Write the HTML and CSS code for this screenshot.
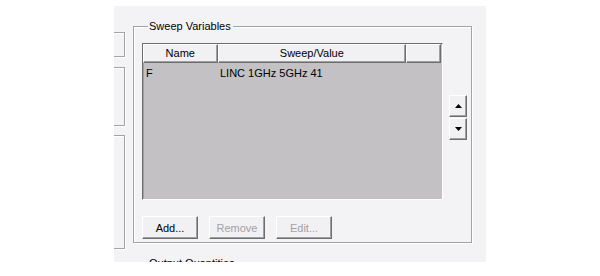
FILE: index.html
```html
<!DOCTYPE html>
<html lang="en">
<head>
    <meta charset="UTF-8">
    <title>Sweep Variables</title>
    <link rel="stylesheet" href="styles.css">
</head>
<body>

<div class="dialog">
    <div class="left-col">
        <div class="stub stub-a"></div>
        <div class="stub stub-b"></div>
        <div class="stub stub-c"></div>
    </div>

    <div class="main">
        <fieldset class="group sweep-group">
            <legend>Sweep Variables</legend>
            <div class="list-row">
                <div class="list-view">
                    <div class="list-head">
                        <div class="col col-name">Name</div>
                        <div class="col col-value">Sweep/Value</div>
                        <div class="col col-blank"></div>
                    </div>
                    <div class="list-item">
                        <span class="cell-name">F</span>
                        <span class="cell-value">LINC 1GHz 5GHz 41</span>
                    </div>
                </div>
                <div class="spin">
                    <button class="spin-btn">
                        <svg width="7" height="4" viewBox="0 0 7 4"><polygon points="0,4 7,4 3.5,0" fill="#000"/></svg>
                    </button>
                    <button class="spin-btn">
                        <svg width="7" height="4" viewBox="0 0 7 4"><polygon points="0,0 7,0 3.5,4" fill="#000"/></svg>
                    </button>
                </div>
            </div>
            <div class="btn-row">
                <button class="win-btn">Add...</button>
                <button class="win-btn" disabled>Remove</button>
                <button class="win-btn" disabled>Edit...</button>
            </div>
        </fieldset>

        <fieldset class="group output-group">
            <legend>Output Quantities</legend>
        </fieldset>
    </div>
</div>

</body>
</html>
```

FILE: styles.css
```css
body {
    margin: 0;
    padding: 0;
    background-color: #fff;
    font-family: "Liberation Sans", Arial, sans-serif;
    font-size: 11px;
    color: #000;
}
.dialog {
    display: flex;
    margin: 6px 0 0 114px;
    width: 372px;
    height: 256px;
    overflow: hidden;
    background-color: #f3f2f5;
}
.left-col {
    width: 11px;
    flex-shrink: 0;
}
.stub {
    width: 10px;
    border: 1px solid #a3a3a3;
    border-left: none;
    box-shadow: 1px 1px 0 #fff, inset 0 1px 0 #fff;
}
.stub-a {
    margin-top: 26px;
    height: 23px;
}
.stub-b {
    margin-top: 10px;
    height: 57px;
}
.stub-c {
    margin-top: 9px;
    height: 112px;
}
.main {
    margin-left: 8px;
    padding-top: 14px;
    width: 339px;
    flex-shrink: 0;
}
.group {
    margin: 0;
    padding: 10px 8px 9px 8px;
    border: 1px solid #a3a3a3;
    box-shadow: 1px 1px 0 #fff, inset 1px 1px 0 #fff;
    min-width: 0;
}
.group legend {
    margin-left: 6px;
    padding: 0 2px 0 1px;
    line-height: 13px;
}
.sweep-group {
    height: 223px;
    box-sizing: border-box;
}
.list-row {
    display: flex;
}
.list-view {
    width: 301px;
    height: 157px;
    box-sizing: border-box;
    background-color: #c3c1c4;
    border-top: 1px solid #6d6d6d;
    border-left: 1px solid #6d6d6d;
    border-right: 1px solid #fff;
    border-bottom: 1px solid #fff;
    box-shadow: inset 1px 1px 0 #a0a0a0;
}
.list-head {
    display: flex;
    height: 19px;
    margin: 0 1px 0 0;
}
.col {
    box-sizing: border-box;
    height: 19px;
    line-height: 17px;
    text-align: center;
    background-color: #f1f0f3;
    border-top: 1px solid #fff;
    border-left: 1px solid #fff;
    border-right: 1px solid #6d6d6d;
    border-bottom: 1px solid #6d6d6d;
    box-shadow: inset -1px -1px 0 #a0a0a0;
}
.col-name {
    width: 75px;
}
.col-value {
    width: 190px;
}
.col-blank {
    width: 35px;
}
.list-item {
    display: flex;
    height: 16px;
    padding-top: 2px;
    line-height: 17px;
}
.cell-name {
    width: 75px;
    padding-left: 3px;
    box-sizing: border-box;
}
.cell-value {
    padding-left: 2px;
}
.spin {
    display: flex;
    flex-direction: column;
    gap: 1px;
    margin-left: 6px;
    padding-top: 52px;
}
.win-btn,
.spin-btn {
    font-family: "Liberation Sans", Arial, sans-serif;
    font-size: 11px;
    color: #000;
    background-color: #f1f0f3;
    border-top: 1px solid #fff;
    border-left: 1px solid #fff;
    border-right: 1px solid #6d6d6d;
    border-bottom: 1px solid #6d6d6d;
    box-shadow: inset -1px -1px 0 #a0a0a0;
    border-radius: 0;
    padding: 0;
}
.spin-btn {
    width: 18px;
    height: 22px;
    display: flex;
    align-items: center;
    justify-content: center;
}
.btn-row {
    display: flex;
    gap: 11px;
    margin-top: 16px;
}
.win-btn {
    width: 56px;
    height: 23px;
}
.win-btn:disabled {
    color: #a3a1a4;
}
.output-group {
    margin-top: 14px;
    height: 40px;
}
```
